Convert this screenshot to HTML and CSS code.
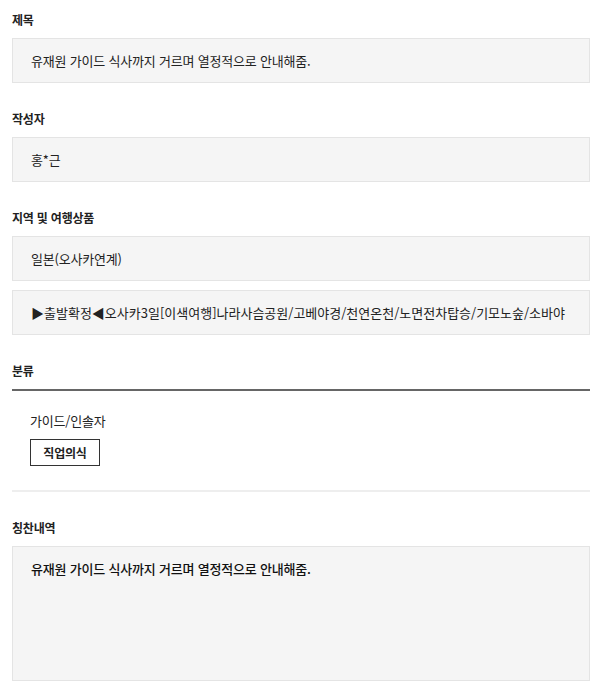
FILE: index.html
```html
<!DOCTYPE html>
<html lang="ko">
<head>
<meta charset="utf-8">
<link rel="stylesheet" href="styles.css">
</head>
<body>
<div class="page">
  <section class="field">
    <h3 class="label">제목</h3>
    <div class="box">유재원 가이드 식사까지 거르며 열정적으로 안내해줌.</div>
  </section>
  <section class="field">
    <h3 class="label">작성자</h3>
    <div class="box">홍*근</div>
  </section>
  <section class="field">
    <h3 class="label">지역 및 여행상품</h3>
    <div class="box">일본(오사카연계)</div>
    <div class="box box-gap"><span class="clip">▶출발확정◀오사카3일[이색여행]나라사슴공원/고베야경/천연온천/노면전차탑승/기모노숲/소바야</span></div>
  </section>
  <section class="field cat">
    <h3 class="label label-line">분류</h3>
    <div class="cat-body">
      <p class="cat-name">가이드/인솔자</p>
      <span class="tag">직업의식</span>
    </div>
  </section>
  <section class="field">
    <h3 class="label">칭찬내역</h3>
    <div class="box box-big">유재원 가이드 식사까지 거르며 열정적으로 안내해줌.</div>
  </section>
</div>
</body>
</html>
```

FILE: styles.css
```css
* { box-sizing: border-box; }
html, body { margin: 0; padding: 0; background: #fff; }
body {
  font-family: "Noto Sans CJK KR", "Noto Sans", sans-serif;
  color: #222;
}
.page {
  padding: 10px 10px 0 12px;
}
.field {
  margin-bottom: 26px;
}
.label {
  margin: 0 0 8px;
  font-size: 12px;
  font-weight: 700;
  line-height: 20px;
  height: 20px;
  letter-spacing: -0.2px;
}
.box {
  background: #f5f5f5;
  border: 1px solid #e4e4e4;
  height: 45px;
  padding: 0 14px 0 18px;
  display: flex;
  align-items: center;
  font-size: 13px;
  letter-spacing: -0.2px;
  white-space: nowrap;
}
.box-gap { margin-top: 9px; }
.clip {
  display: block;
  overflow: hidden;
  width: 100%;
  letter-spacing: 0;
}
.label-line {
  margin-bottom: 0;
  line-height: 20px;
  border-bottom: 2px solid #666;
  height: 30px;
}
.cat {
  margin-bottom: 0;
}
.cat-body {
  padding: 20px 18px 24px;
  border-bottom: 2px solid #eee;
  margin-bottom: 26px;
}
.cat-name {
  margin: 0 0 8px;
  font-size: 13px;
  line-height: 20px;
  letter-spacing: -0.2px;
}
.tag {
  display: inline-block;
  width: 70px;
  height: 27px;
  line-height: 25px;
  text-align: center;
  border: 1px solid #333;
  font-size: 12px;
  font-weight: 700;
  letter-spacing: -0.2px;
}
.box-big {
  height: 135px;
  align-items: flex-start;
  padding-top: 12px;
  font-weight: 500;
  color: #111;
}
```
